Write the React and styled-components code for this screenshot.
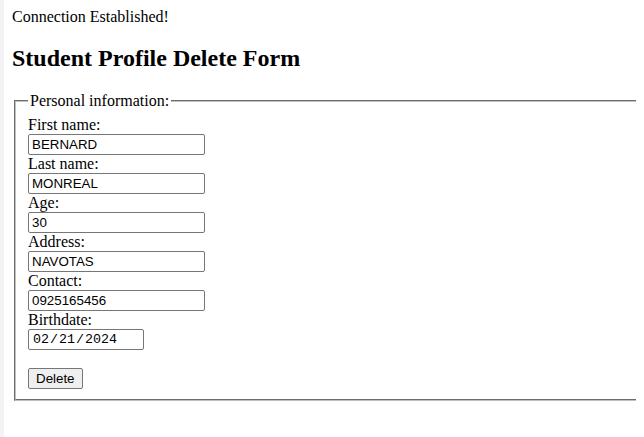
import React from 'react'
import styled, { createGlobalStyle } from 'styled-components'

const GlobalStyle = createGlobalStyle`
  html {
    height: 100%;
    overflow: hidden;
    border-left: 4px solid #f3f3f3;
    background: #fff;
  }
  body {
    margin: 8px;
    font-family: "Liberation Serif", "Times New Roman", serif;
    font-size: 16px;
    color: #000;
  }
`

const Status = styled.div``

const Title = styled.h2`
  font-size: 24px;
  font-weight: bold;
  margin: 19px 0 20px;
`

// the fieldset runs on past the right edge of the window
const Fieldset = styled.fieldset`
  margin: 0 -16px 0 2px;
  padding: 0.35em 0.75em 0.625em;
  border: 2px groove #c0c0c0;
  border-right: 0;
`

const Legend = styled.legend`
  padding: 0 2px;
`

const Label = styled.label``

const TextInput = styled.input`
  font-family: "Liberation Sans", Arial, sans-serif;
  font-size: 13.333px;
  width: 177px;
  height: 21px;
  box-sizing: border-box;
  padding: 1px 3px;
  border: 1px solid #767676;
  border-radius: 2px;
  color: #000;
`

const DateInput = styled(TextInput)`
  width: 116px;
  font-family: "Liberation Mono", "DejaVu Sans Mono", monospace;
  &::-webkit-calendar-picker-indicator {
    display: none;
  }
`

const DeleteButton = styled.button`
  font-family: "Liberation Sans", Arial, sans-serif;
  font-size: 13.333px;
  padding: 1px 7px;
  height: 21px;
  background: #efefef;
  border: 1px solid #767676;
  border-radius: 2px;
  color: #000;
`

const fields = [
  { id: 'fname', label: 'First name:', value: 'BERNARD' },
  { id: 'lname', label: 'Last name:', value: 'MONREAL' },
  { id: 'age', label: 'Age:', value: '30' },
  { id: 'address', label: 'Address:', value: 'NAVOTAS' },
  { id: 'contact', label: 'Contact:', value: '0925165456' },
]

export default function App() {
  return (
    <>
      <GlobalStyle />
      <Status>Connection Established!</Status>
      <Title>Student Profile Delete Form</Title>
      <form onSubmit={(e) => e.preventDefault()}>
        <Fieldset>
          <Legend>Personal information:</Legend>
          {fields.map((f) => (
            <React.Fragment key={f.id}>
              <Label htmlFor={f.id}>{f.label}</Label>
              <br />
              <TextInput type="text" id={f.id} defaultValue={f.value} />
              <br />
            </React.Fragment>
          ))}
          <Label htmlFor="bdate">Birthdate:</Label>
          <br />
          <DateInput type="date" id="bdate" defaultValue="2024-02-21" />
          <br />
          <br />
          <DeleteButton type="submit">Delete</DeleteButton>
        </Fieldset>
      </form>
    </>
  )
}
